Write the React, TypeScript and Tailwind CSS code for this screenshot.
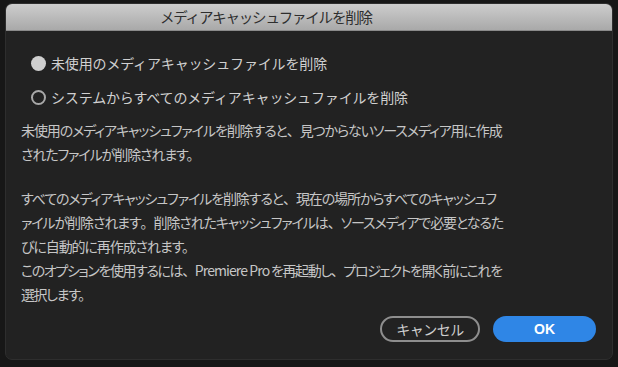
import React from "react";

const jp = { fontFamily: '"Noto Sans CJK JP", "Noto Sans", sans-serif' };

function F({ c }: { c: string }) {
  return <span className="[font-feature-settings:normal]">{c}</span>;
}

export default function App() {
  return (
    <div className="w-[618px] h-[367px] bg-[#171717] pt-[3px] pl-[5px] overflow-hidden" style={jp}>
      <div className="w-[608px] h-[357px] rounded-[7px] bg-[#222222] border border-[#2e2e2e] overflow-hidden flex flex-col">
        <div className="h-[27px] shrink-0 bg-gradient-to-b from-[#cdcdcd] to-[#a9a9a9] flex items-center pl-[154px] border-b border-[#8a8a8a]">
          <span className="text-[14.5px] text-[#2e2e2e] leading-none tracking-[-1.2px]">メディアキャッシュファイルを削除</span>
        </div>
        <div className="flex flex-col px-[15px] pt-[22px]">
          <div className="flex flex-col gap-[14px] pl-[10px]">
            <div className="flex items-center h-[20px] gap-[5px]">
              <span className="w-[15px] h-[15px] shrink-0 rounded-full bg-[#cfcfcf]" />
              <span className="text-[14px] text-[#d0d0d0] leading-none tracking-[-0.15px]">未使用のメディアキャッシュファイルを削除</span>
            </div>
            <div className="flex items-center h-[20px] gap-[5px]">
              <span className="w-[15px] h-[15px] shrink-0 rounded-full border-[2.5px] border-[#a8a8a8]" />
              <span className="text-[14px] text-[#d0d0d0] leading-none tracking-[-0.15px]">システムからすべてのメディアキャッシュファイルを削除</span>
            </div>
          </div>
          <div className="mt-[11px] text-[14px] leading-[24px] text-[#c6c6c6] whitespace-nowrap tracking-[-1.1px] [font-feature-settings:'palt']">
            <p>未使用のメディアキャッシュファイルを削除すると<F c="、" />見つからないソースメディア用に作成<br />されたファイルが削除されます。</p>
            <p className="mt-[20px]">すべてのメディアキャッシュファイルを削除すると<F c="、" />現在の場所からすべてのキャッシュフ<br />ァイルが削除されます<F c="。" />削除されたキャッシュファイルは<F c="、" />ソースメディアで必要となるた<br />びに自動的に再作成されます。</p>
            <p className="tracking-[-1.4px]">このオプションを使用するには<F c="、" /><span className="tracking-[-0.9px]">Premiere Pro</span> を再起動し<F c="、" />プロジェクトを開く前にこれを<br />選択します。</p>
          </div>
          <div className="flex justify-end gap-[13px] mt-[10px] pr-[1px]">
            <button className="w-[100px] h-[26px] rounded-full border-2 border-[#8e8e8e] text-[14px] text-[#cfcfcf] flex items-center justify-center leading-none tracking-[-0.5px]">キャンセル</button>
            <button className="w-[103px] h-[26px] rounded-full bg-[#2f86e6] text-[14px] font-bold text-white flex items-center justify-center leading-none" style={{ fontFamily: '"Liberation Sans", Arial, sans-serif' }}>OK</button>
          </div>
        </div>
      </div>
    </div>
  );
}
